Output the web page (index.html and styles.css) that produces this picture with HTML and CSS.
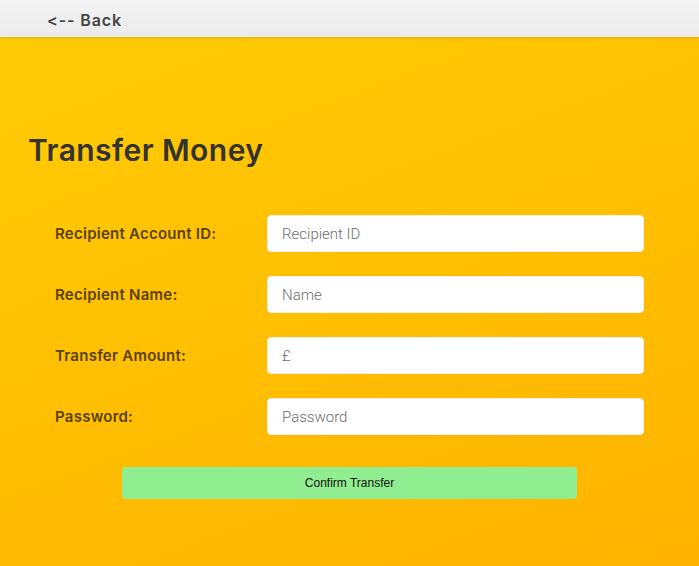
FILE: index.html
```html
<!DOCTYPE html>
<html>
<head>
<meta charset="utf-8">
<link rel="stylesheet" href="styles.css">
</head>
<body>
<header class="topbar"><a class="back" href="#">&lt;-- Back</a></header>
<main class="page">
  <h1 class="title">Transfer Money</h1>
  <form class="form">
    <label class="label">Recipient Account ID:</label>
    <input class="field" type="text" placeholder="Recipient ID">
    <label class="label">Recipient Name:</label>
    <input class="field" type="text" placeholder="Name">
    <label class="label">Transfer Amount:</label>
    <input class="field" type="text" placeholder="£">
    <label class="label">Password:</label>
    <input class="field" type="password" placeholder="Password">
    <button class="confirm" type="button">Confirm Transfer</button>
  </form>
</main>
</body>
</html>
```
FILE: styles.css
```css
* { box-sizing: border-box; }
html, body { margin: 0; height: 100%; }
body {
  font-family: "Inter", "Open Sans", sans-serif;
  display: flex;
  flex-direction: column;
  overflow: hidden;
}
.topbar {
  height: 37px;
  flex: 0 0 37px;
  background: linear-gradient(#f4f4f4, #ebebeb);
  box-shadow: 0 1px 2px rgba(0,0,0,0.12);
  padding: 3px 0 0 47px;
  display: flex;
  align-items: center;
  position: relative;
  z-index: 1;
}
.back {
  font-size: 16px;
  font-weight: 600;
  color: #444;
  text-decoration: none;
  letter-spacing: 0.9px;
}
.page {
  flex: 1;
  background: linear-gradient(160deg, #ffcb05 0%, #ffb300 100%);
  padding: 93px 0 0 28px;
}
.title {
  margin: 0 0 45px 0;
  font-size: 30px;
  font-weight: 600;
  color: #333;
  line-height: 40px;
  letter-spacing: 0.45px;
}
.form {
  display: grid;
  grid-template-columns: 212px 377px;
  row-gap: 24px;
  margin-left: 27px;
  align-items: center;
}
.label {
  font-size: 15px;
  font-weight: 600;
  color: #5a4100;
  letter-spacing: 0.25px;
}
.field {
  height: 37px;
  border: 1px solid #eee;
  border-radius: 4px;
  background: #fff;
  padding: 0 14px;
  font-family: "Roboto", sans-serif;
  font-weight: 300;
  font-size: 15px;
  color: #333;
}
.field::placeholder { color: #6e6e6e; }
.confirm {
  grid-column: 1 / -1;
  margin: 8px 0 0 67px;
  width: 455px;
  height: 32px;
  border: none;
  border-radius: 4px;
  background: #90ee90;
  font-family: "Liberation Sans", Arial, sans-serif;
  font-size: 12px;
  color: #111;
}
```
